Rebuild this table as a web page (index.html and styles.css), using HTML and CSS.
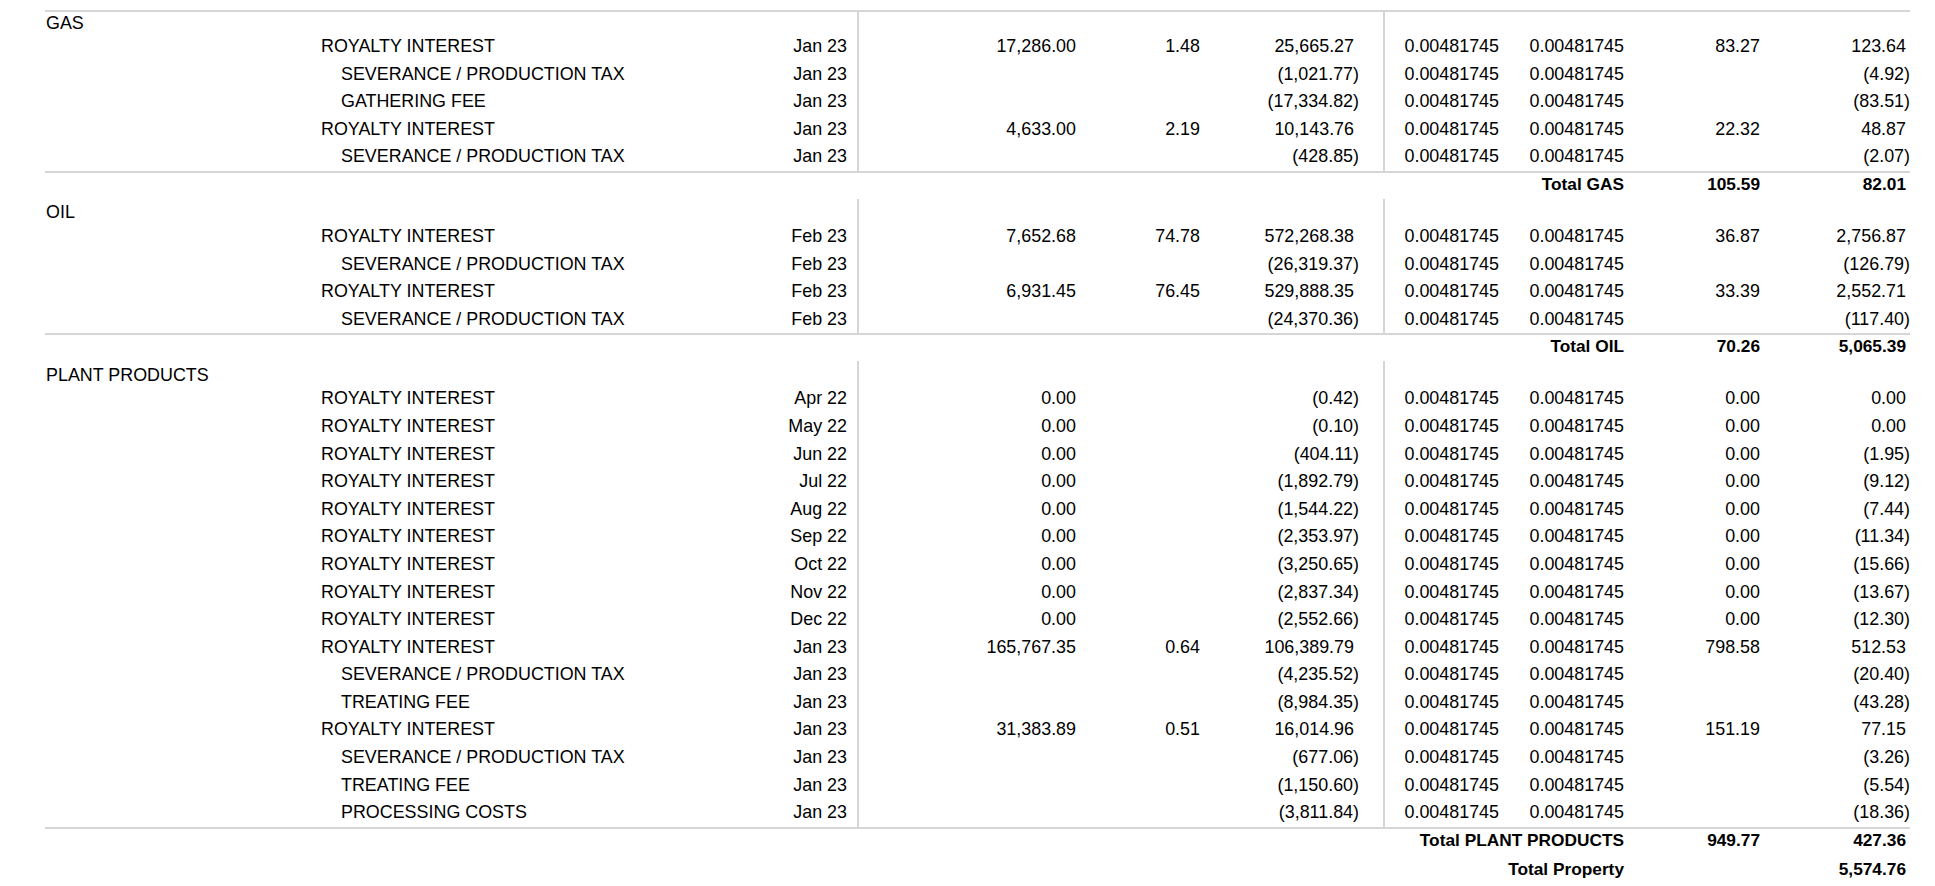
FILE: index.html
```html
<!DOCTYPE html>
<html>
<head>
<meta charset="utf-8">
<title>Property Detail</title>
<link rel="stylesheet" href="styles.css">
</head>
<body>
<div class="report">
  <div class="topline"></div>

  <section class="grp first">
    <div class="r hd"><div class="cat">GAS</div><div class="q"></div><div class="p"></div><div class="v"></div><div class="k1"></div><div class="k2"></div><div class="nq"></div><div class="nv"></div></div>
    <div class="r"><div></div><div class="d">ROYALTY INTEREST</div><div class="dt">Jan 23</div><div class="q">17,286.00</div><div class="p">1.48</div><div class="v ps">25,665.27</div><div class="k1">0.00481745</div><div class="k2">0.00481745</div><div class="nq">83.27</div><div class="nv ps">123.64</div></div>
    <div class="r"><div></div><div class="d sub">SEVERANCE / PRODUCTION TAX</div><div class="dt">Jan 23</div><div class="q"></div><div class="p"></div><div class="v">(1,021.77)</div><div class="k1">0.00481745</div><div class="k2">0.00481745</div><div class="nq"></div><div class="nv">(4.92)</div></div>
    <div class="r"><div></div><div class="d sub">GATHERING FEE</div><div class="dt">Jan 23</div><div class="q"></div><div class="p"></div><div class="v">(17,334.82)</div><div class="k1">0.00481745</div><div class="k2">0.00481745</div><div class="nq"></div><div class="nv">(83.51)</div></div>
    <div class="r"><div></div><div class="d">ROYALTY INTEREST</div><div class="dt">Jan 23</div><div class="q">4,633.00</div><div class="p">2.19</div><div class="v ps">10,143.76</div><div class="k1">0.00481745</div><div class="k2">0.00481745</div><div class="nq">22.32</div><div class="nv ps">48.87</div></div>
    <div class="r"><div></div><div class="d sub">SEVERANCE / PRODUCTION TAX</div><div class="dt">Jan 23</div><div class="q"></div><div class="p"></div><div class="v">(428.85)</div><div class="k1">0.00481745</div><div class="k2">0.00481745</div><div class="nq"></div><div class="nv">(2.07)</div></div>
    <div class="line"></div>
    <div class="r tot"><div class="tl">Total GAS</div><div class="nq">105.59</div><div class="nv ps">82.01</div></div>
  </section>

  <section class="grp">
    <div class="r hd"><div class="cat">OIL</div><div class="q"></div><div class="p"></div><div class="v"></div><div class="k1"></div><div class="k2"></div><div class="nq"></div><div class="nv"></div></div>
    <div class="r"><div></div><div class="d">ROYALTY INTEREST</div><div class="dt">Feb 23</div><div class="q">7,652.68</div><div class="p">74.78</div><div class="v ps">572,268.38</div><div class="k1">0.00481745</div><div class="k2">0.00481745</div><div class="nq">36.87</div><div class="nv ps">2,756.87</div></div>
    <div class="r"><div></div><div class="d sub">SEVERANCE / PRODUCTION TAX</div><div class="dt">Feb 23</div><div class="q"></div><div class="p"></div><div class="v">(26,319.37)</div><div class="k1">0.00481745</div><div class="k2">0.00481745</div><div class="nq"></div><div class="nv">(126.79)</div></div>
    <div class="r"><div></div><div class="d">ROYALTY INTEREST</div><div class="dt">Feb 23</div><div class="q">6,931.45</div><div class="p">76.45</div><div class="v ps">529,888.35</div><div class="k1">0.00481745</div><div class="k2">0.00481745</div><div class="nq">33.39</div><div class="nv ps">2,552.71</div></div>
    <div class="r"><div></div><div class="d sub">SEVERANCE / PRODUCTION TAX</div><div class="dt">Feb 23</div><div class="q"></div><div class="p"></div><div class="v">(24,370.36)</div><div class="k1">0.00481745</div><div class="k2">0.00481745</div><div class="nq"></div><div class="nv">(117.40)</div></div>
    <div class="line"></div>
    <div class="r tot"><div class="tl">Total OIL</div><div class="nq">70.26</div><div class="nv ps">5,065.39</div></div>
  </section>

  <section class="grp">
    <div class="r hd"><div class="cat">PLANT PRODUCTS</div><div class="q"></div><div class="p"></div><div class="v"></div><div class="k1"></div><div class="k2"></div><div class="nq"></div><div class="nv"></div></div>
    <div class="r"><div></div><div class="d">ROYALTY INTEREST</div><div class="dt">Apr 22</div><div class="q">0.00</div><div class="p"></div><div class="v">(0.42)</div><div class="k1">0.00481745</div><div class="k2">0.00481745</div><div class="nq">0.00</div><div class="nv ps">0.00</div></div>
    <div class="r"><div></div><div class="d">ROYALTY INTEREST</div><div class="dt">May 22</div><div class="q">0.00</div><div class="p"></div><div class="v">(0.10)</div><div class="k1">0.00481745</div><div class="k2">0.00481745</div><div class="nq">0.00</div><div class="nv ps">0.00</div></div>
    <div class="r"><div></div><div class="d">ROYALTY INTEREST</div><div class="dt">Jun 22</div><div class="q">0.00</div><div class="p"></div><div class="v">(404.11)</div><div class="k1">0.00481745</div><div class="k2">0.00481745</div><div class="nq">0.00</div><div class="nv">(1.95)</div></div>
    <div class="r"><div></div><div class="d">ROYALTY INTEREST</div><div class="dt">Jul 22</div><div class="q">0.00</div><div class="p"></div><div class="v">(1,892.79)</div><div class="k1">0.00481745</div><div class="k2">0.00481745</div><div class="nq">0.00</div><div class="nv">(9.12)</div></div>
    <div class="r"><div></div><div class="d">ROYALTY INTEREST</div><div class="dt">Aug 22</div><div class="q">0.00</div><div class="p"></div><div class="v">(1,544.22)</div><div class="k1">0.00481745</div><div class="k2">0.00481745</div><div class="nq">0.00</div><div class="nv">(7.44)</div></div>
    <div class="r"><div></div><div class="d">ROYALTY INTEREST</div><div class="dt">Sep 22</div><div class="q">0.00</div><div class="p"></div><div class="v">(2,353.97)</div><div class="k1">0.00481745</div><div class="k2">0.00481745</div><div class="nq">0.00</div><div class="nv">(11.34)</div></div>
    <div class="r"><div></div><div class="d">ROYALTY INTEREST</div><div class="dt">Oct 22</div><div class="q">0.00</div><div class="p"></div><div class="v">(3,250.65)</div><div class="k1">0.00481745</div><div class="k2">0.00481745</div><div class="nq">0.00</div><div class="nv">(15.66)</div></div>
    <div class="r"><div></div><div class="d">ROYALTY INTEREST</div><div class="dt">Nov 22</div><div class="q">0.00</div><div class="p"></div><div class="v">(2,837.34)</div><div class="k1">0.00481745</div><div class="k2">0.00481745</div><div class="nq">0.00</div><div class="nv">(13.67)</div></div>
    <div class="r"><div></div><div class="d">ROYALTY INTEREST</div><div class="dt">Dec 22</div><div class="q">0.00</div><div class="p"></div><div class="v">(2,552.66)</div><div class="k1">0.00481745</div><div class="k2">0.00481745</div><div class="nq">0.00</div><div class="nv">(12.30)</div></div>
    <div class="r"><div></div><div class="d">ROYALTY INTEREST</div><div class="dt">Jan 23</div><div class="q">165,767.35</div><div class="p">0.64</div><div class="v ps">106,389.79</div><div class="k1">0.00481745</div><div class="k2">0.00481745</div><div class="nq">798.58</div><div class="nv ps">512.53</div></div>
    <div class="r"><div></div><div class="d sub">SEVERANCE / PRODUCTION TAX</div><div class="dt">Jan 23</div><div class="q"></div><div class="p"></div><div class="v">(4,235.52)</div><div class="k1">0.00481745</div><div class="k2">0.00481745</div><div class="nq"></div><div class="nv">(20.40)</div></div>
    <div class="r"><div></div><div class="d sub">TREATING FEE</div><div class="dt">Jan 23</div><div class="q"></div><div class="p"></div><div class="v">(8,984.35)</div><div class="k1">0.00481745</div><div class="k2">0.00481745</div><div class="nq"></div><div class="nv">(43.28)</div></div>
    <div class="r"><div></div><div class="d">ROYALTY INTEREST</div><div class="dt">Jan 23</div><div class="q">31,383.89</div><div class="p">0.51</div><div class="v ps">16,014.96</div><div class="k1">0.00481745</div><div class="k2">0.00481745</div><div class="nq">151.19</div><div class="nv ps">77.15</div></div>
    <div class="r"><div></div><div class="d sub">SEVERANCE / PRODUCTION TAX</div><div class="dt">Jan 23</div><div class="q"></div><div class="p"></div><div class="v">(677.06)</div><div class="k1">0.00481745</div><div class="k2">0.00481745</div><div class="nq"></div><div class="nv">(3.26)</div></div>
    <div class="r"><div></div><div class="d sub">TREATING FEE</div><div class="dt">Jan 23</div><div class="q"></div><div class="p"></div><div class="v">(1,150.60)</div><div class="k1">0.00481745</div><div class="k2">0.00481745</div><div class="nq"></div><div class="nv">(5.54)</div></div>
    <div class="r"><div></div><div class="d sub">PROCESSING COSTS</div><div class="dt">Jan 23</div><div class="q"></div><div class="p"></div><div class="v">(3,811.84)</div><div class="k1">0.00481745</div><div class="k2">0.00481745</div><div class="nq"></div><div class="nv">(18.36)</div></div>
    <div class="line"></div>
    <div class="r tot"><div class="tl">Total PLANT PRODUCTS</div><div class="nq">949.77</div><div class="nv ps">427.36</div></div>
  </section>

  <div class="r prop"><div class="tl">Total Property</div><div class="nq"></div><div class="nv ps">5,574.76</div></div>
</div>
</body>
</html>
```

FILE: styles.css
```css
* {
  box-sizing: border-box;
  margin: 0;
  padding: 0;
}

html, body {
  background: #ffffff;
}

body {
  margin: 0;
  color: #000000;
  font-family: "Liberation Sans", Arial, sans-serif;
  font-size: 17.9px;
  overflow: hidden;
}

.report {
  margin-left: 45px;
  width: 1865px;
  padding-top: 10px;
}

.topline,
.line {
  height: 2px;
  background: #d6d6d6;
}

.r {
  display: grid;
  grid-template-columns: 276px 455px 81px 219px 124px 183px 116px 125px 136px 150px;
  height: 27.6px;
  line-height: 27.6px;
  white-space: nowrap;
}

.d {
  text-align: left;
}

.d.sub {
  padding-left: 20px;
}

.dt {
  text-align: right;
  padding-right: 10px;
}

.q,
.p,
.v,
.k1,
.k2,
.nq,
.nv {
  text-align: right;
}

.q,
.k1 {
  border-left: 2px solid #d6d6d6;
}

.v {
  padding-right: 24px;
}

.v.ps {
  padding-right: 29px;
}

.nv.ps {
  padding-right: 4px;
}

/* category header row */
.r.hd {
  height: 24px;
  line-height: 20.5px;
}

.grp.first .r.hd {
  height: 21px;
}

.cat {
  grid-column: 1 / 4;
  display: flex;
  align-items: flex-end;
  padding-left: 1px;
}

/* totals */
.r.tot {
  height: 26px;
  line-height: 23px;
  font-weight: bold;
  font-size: 17.3px;
}

.r.prop {
  height: 28px;
  line-height: 28px;
  font-weight: bold;
  font-size: 17.3px;
}

.tl {
  grid-column: 1 / 9;
  text-align: right;
}
```
